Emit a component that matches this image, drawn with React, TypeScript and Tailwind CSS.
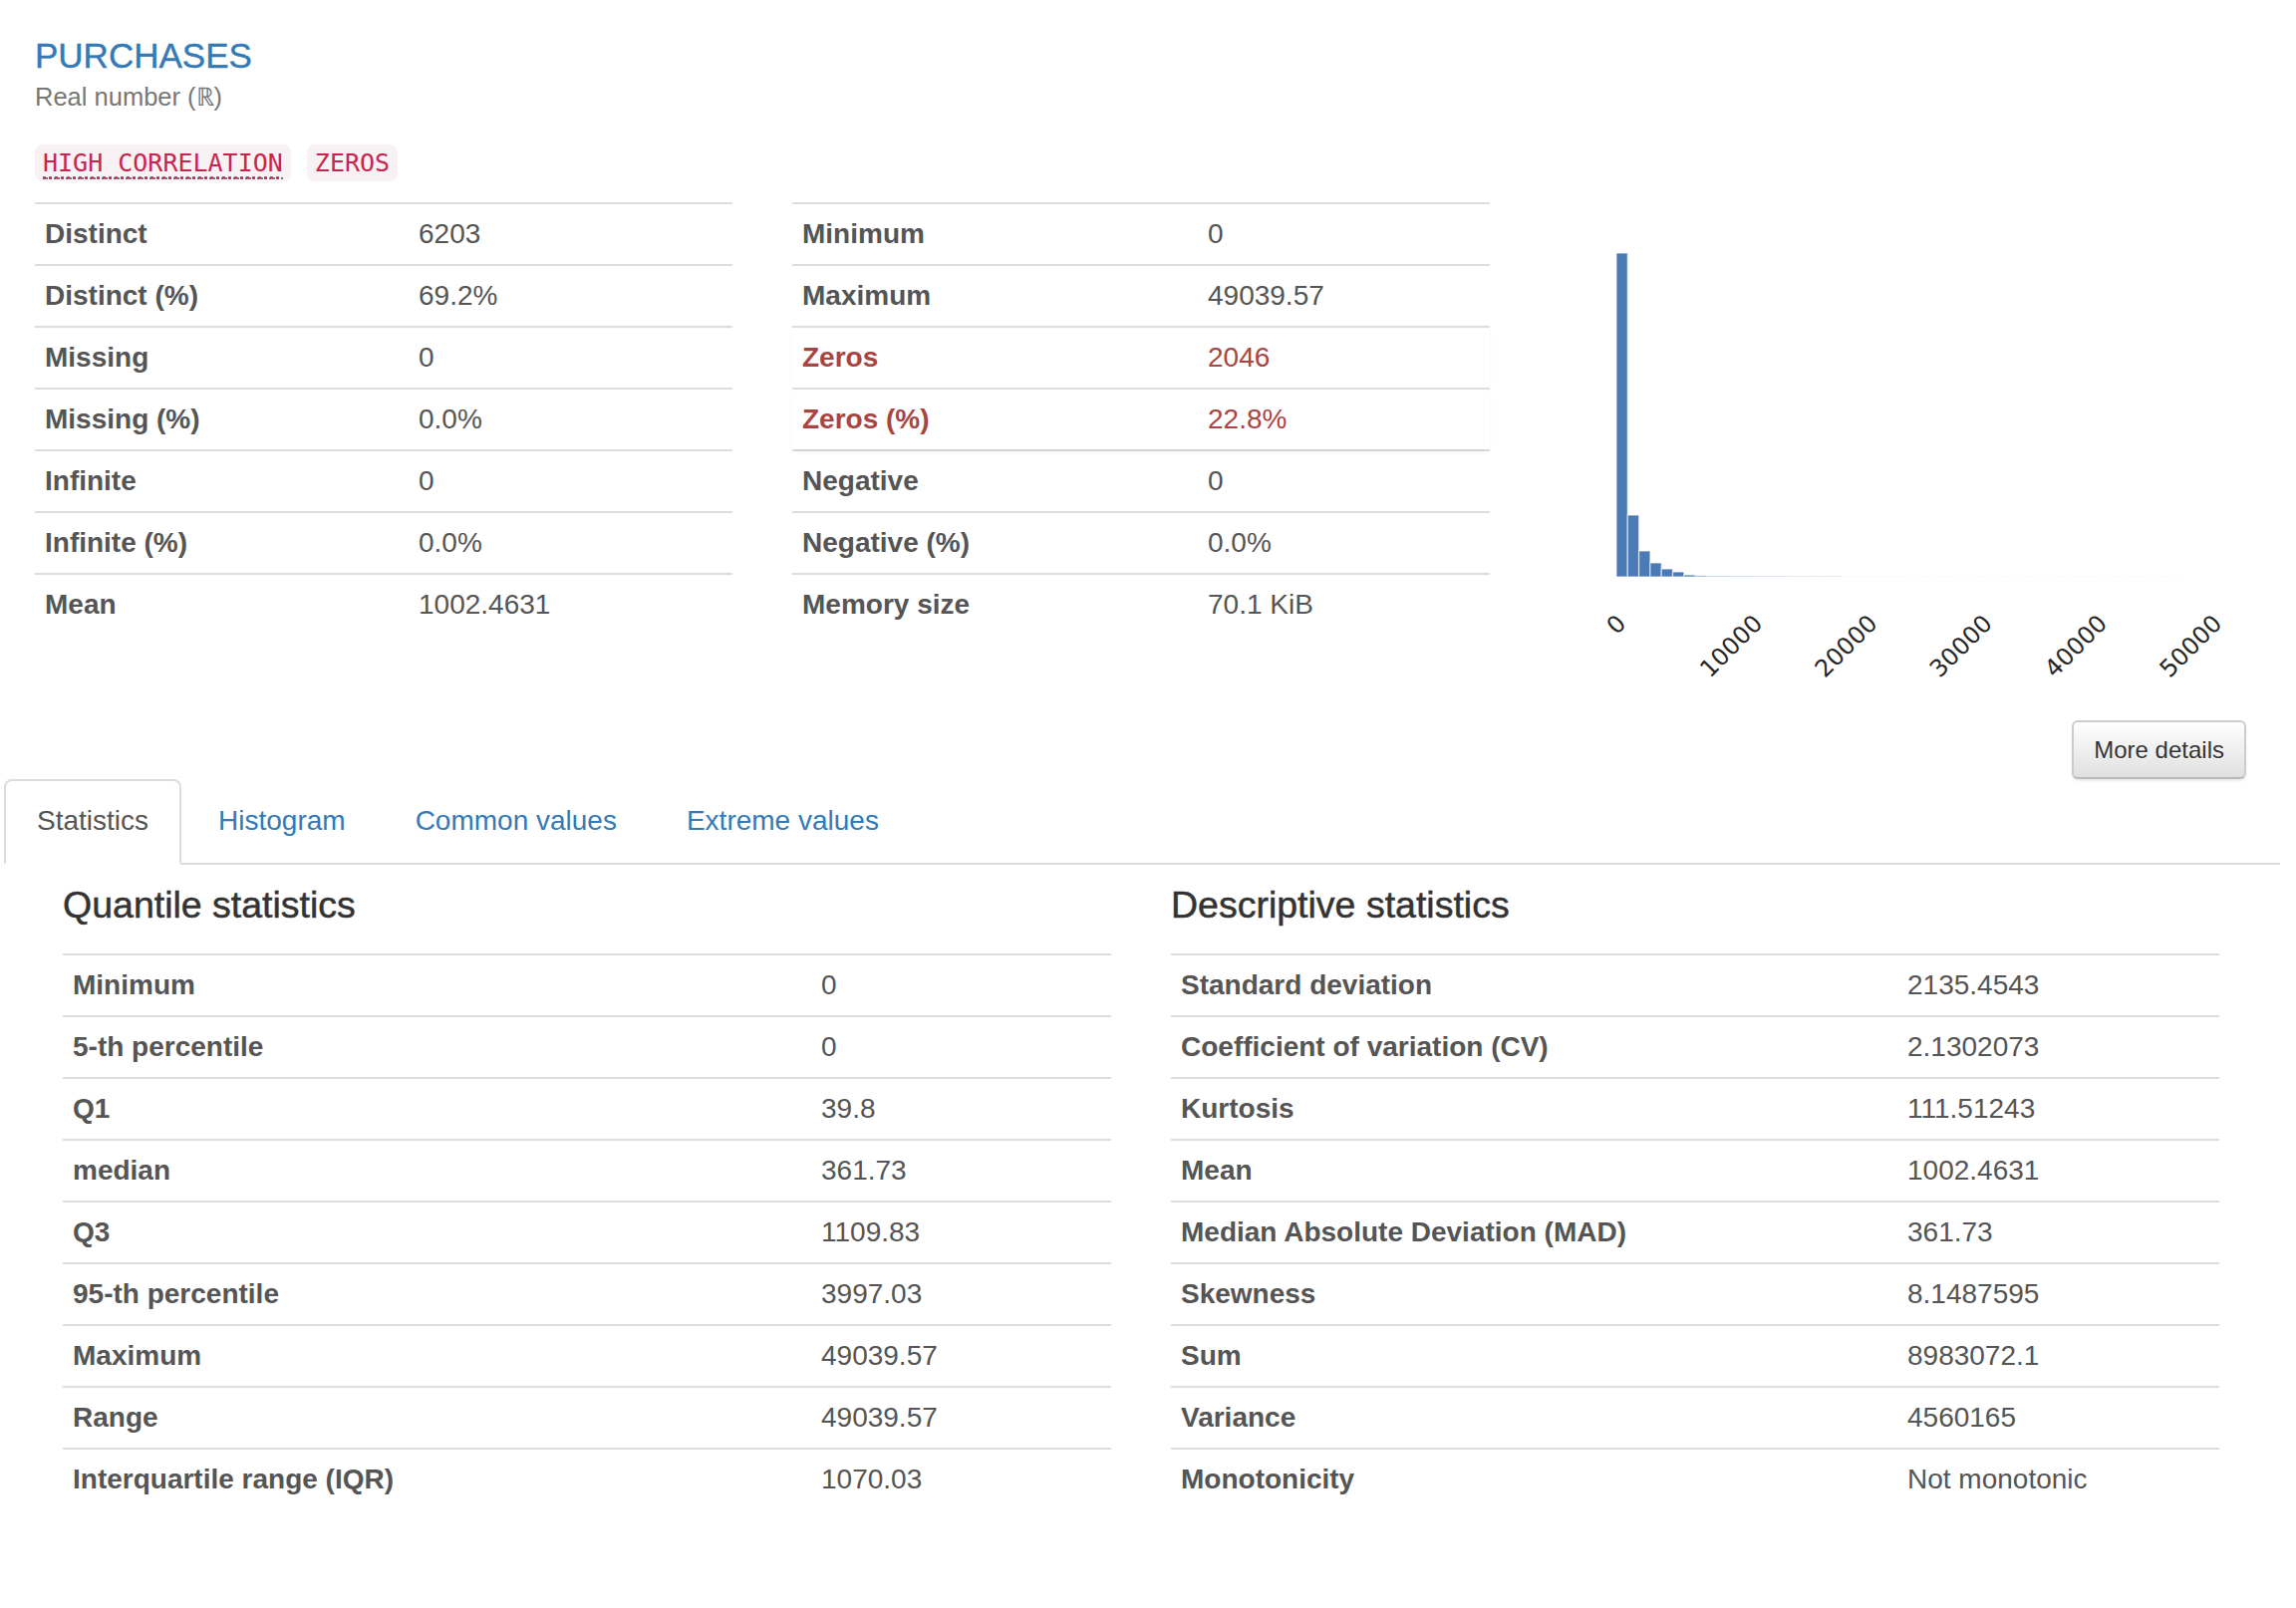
import React from "react";
import clsx from "clsx";

type Row = { label: string; value: string; alert?: boolean };

const overviewLeft: Row[] = [
  { label: "Distinct", value: "6203" },
  { label: "Distinct (%)", value: "69.2%" },
  { label: "Missing", value: "0" },
  { label: "Missing (%)", value: "0.0%" },
  { label: "Infinite", value: "0" },
  { label: "Infinite (%)", value: "0.0%" },
  { label: "Mean", value: "1002.4631" },
];

const overviewRight: Row[] = [
  { label: "Minimum", value: "0" },
  { label: "Maximum", value: "49039.57" },
  { label: "Zeros", value: "2046", alert: true },
  { label: "Zeros (%)", value: "22.8%", alert: true },
  { label: "Negative", value: "0" },
  { label: "Negative (%)", value: "0.0%" },
  { label: "Memory size", value: "70.1 KiB" },
];

const quantiles: Row[] = [
  { label: "Minimum", value: "0" },
  { label: "5-th percentile", value: "0" },
  { label: "Q1", value: "39.8" },
  { label: "median", value: "361.73" },
  { label: "Q3", value: "1109.83" },
  { label: "95-th percentile", value: "3997.03" },
  { label: "Maximum", value: "49039.57" },
  { label: "Range", value: "49039.57" },
  { label: "Interquartile range (IQR)", value: "1070.03" },
];

const descriptive: Row[] = [
  { label: "Standard deviation", value: "2135.4543" },
  { label: "Coefficient of variation (CV)", value: "2.1302073" },
  { label: "Kurtosis", value: "111.51243" },
  { label: "Mean", value: "1002.4631" },
  { label: "Median Absolute Deviation (MAD)", value: "361.73" },
  { label: "Skewness", value: "8.1487595" },
  { label: "Sum", value: "8983072.1" },
  { label: "Variance", value: "4560165" },
  { label: "Monotonicity", value: "Not monotonic" },
];

// bar heights in px, 50 bins from 0 to max; the tail is barely visible
const bins = [
  325, 62, 26, 14, 8, 5, 2, 1.2, 1, 1, 0.8, 0.8, 0.6, 0.6, 0.6, 0.5, 0.5, 0.5, 0.5, 0.5,
  0.4, 0.4, 0.4, 0.4, 0.3, 0.3, 0.3, 0.3, 0.3, 0.3, 0.3, 0.3, 0.3, 0.3, 0.3, 0.3, 0.3, 0.3,
  0.3, 0.3, 0.3, 0.3, 0.3, 0.3, 0.3, 0.3, 0.3, 0.3, 0.3, 0.3,
];

const StatTable = ({ rows, cols }: { rows: Row[]; cols: string }) => (
  <div className="w-full">
    {rows.map((r) => (
      <div
        key={r.label}
        className={clsx(
          "grid border-t-2 border-[#ddd] text-[28px] leading-[40px]",
          cols,
          r.alert ? "relative bg-white text-[#a94442] shadow-[0_3px_5px_-2px_rgba(0,0,0,0.09)]" : "text-[#555]"
        )}
      >
        <div className="px-[10px] py-[10px] font-bold">{r.label}</div>
        <div className="px-[10px] py-[10px]">{r.value}</div>
      </div>
    ))}
  </div>
);

const MiniHistogram = () => {
  const x0 = 67;
  const bw = 11.31;
  const base = 376;
  const ticks = ["0", "10000", "20000", "30000", "40000", "50000"];
  return (
    <svg width="700" height="520" viewBox="0 0 700 520">
      {bins.map((h, i) => (
        <rect
          key={i}
          x={x0 + i * bw}
          y={base - h}
          width={bw}
          height={h}
          fill={i < 8 ? "#4b7bb6" : i < 20 ? "#c9d7ea" : "#eef2f8"}
          stroke="#ffffff"
          strokeOpacity={0.55}
          strokeWidth={i < 8 ? 1.4 : 0}
        />
      ))}
      {ticks.map((t, i) => {
        const w = t.length * 0.636 * 24;
        const cy = 411 + (w + 21.4) * 0.354;
        const cx = x0 + i * 115.3;
        return (
          <text
            key={t}
            transform={`translate(${cx} ${cy}) rotate(-45)`}
            textAnchor="middle"
            dominantBaseline="central"
            fontFamily="'DejaVu Sans', sans-serif"
            fontSize="24"
            fill="#262626"
          >
            {t}
          </text>
        );
      })}
    </svg>
  );
};

export default function App() {
  return (
    <div className="w-[2304px] min-h-[1614px] bg-white font-['Liberation_Sans',Arial,sans-serif] text-[#333]">
      <div className="pl-[4px] w-[2288px]">
        <div className="px-[31px] pt-[36px]">
          <div className="text-[35px] leading-[40px] text-[#337ab7] [-webkit-text-stroke:0.4px_#337ab7]">PURCHASES</div>
          <div className="mt-[6px] text-[25.5px] leading-[30px] text-[#777]">Real number (ℝ)</div>
          <div className="mt-[33px] flex gap-[16px] font-['DejaVu_Sans_Mono',monospace] text-[25px] leading-[29px] text-[#c7254e]">
            <span className="rounded-[8px] bg-[#f9f2f4] px-[8px] py-[4px]">
              <span className="underline decoration-dotted decoration-[#c7254e] underline-offset-[5px] border-b-2 border-dotted border-[#777]">
                HIGH CORRELATION
              </span>
            </span>
            <span className="rounded-[8px] bg-[#f9f2f4] px-[8px] py-[4px]">ZEROS</span>
          </div>

          <div className="mt-[21px] flex items-start">
            <div className="w-[700px]">
              <StatTable rows={overviewLeft} cols="grid-cols-[375px_1fr]" />
            </div>
            <div className="ml-[60px] w-[700px]">
              <StatTable rows={overviewRight} cols="grid-cols-[407px_1fr]" />
            </div>
            <div className="ml-[60px] w-[700px]">
              <MiniHistogram />
            </div>
          </div>

          <div className="flex justify-end pr-[3px]">
            <button className="rounded-[6px] border-2 border-[#ccc] border-b-[#b9b9b9] bg-linear-to-b from-white to-[#e0e0e0] px-[20px] py-[10px] text-[24px] leading-[35px] text-[#333] shadow-[0_2px_2px_rgba(0,0,0,0.075)] [text-shadow:0_1px_0_#fff]">
              More details
            </button>
          </div>
        </div>

        <div className="flex border-b-2 border-[#ddd] text-[28px] leading-[40px]">
          <div className="-mb-[2px] mr-[4px] rounded-t-[8px] border-2 border-[#ddd] border-b-transparent bg-white px-[31px] py-[20px] text-[#555]">
            Statistics
          </div>
          <div className="mr-[4px] border-2 border-transparent px-[31px] py-[20px] text-[#337ab7]">Histogram</div>
          <div className="mr-[4px] border-2 border-transparent px-[31px] py-[20px] text-[#337ab7]">Common values</div>
          <div className="mr-[4px] border-2 border-transparent px-[31px] py-[20px] text-[#337ab7]">Extreme values</div>
        </div>

        <div className="flex gap-[60px] px-[59px]">
          <div className="w-[1052px]">
            <div className="mt-[20px] text-[37.5px] leading-[40px] text-[#333] [-webkit-text-stroke:0.5px_#333]">Quantile statistics</div>
            <div className="mt-[29px]">
              <StatTable rows={quantiles} cols="grid-cols-[751px_1fr]" />
            </div>
          </div>
          <div className="w-[1052px]">
            <div className="mt-[20px] text-[37.5px] leading-[40px] text-[#333] [-webkit-text-stroke:0.5px_#333]">Descriptive statistics</div>
            <div className="mt-[29px]">
              <StatTable rows={descriptive} cols="grid-cols-[729px_1fr]" />
            </div>
          </div>
        </div>
      </div>
    </div>
  );
}
